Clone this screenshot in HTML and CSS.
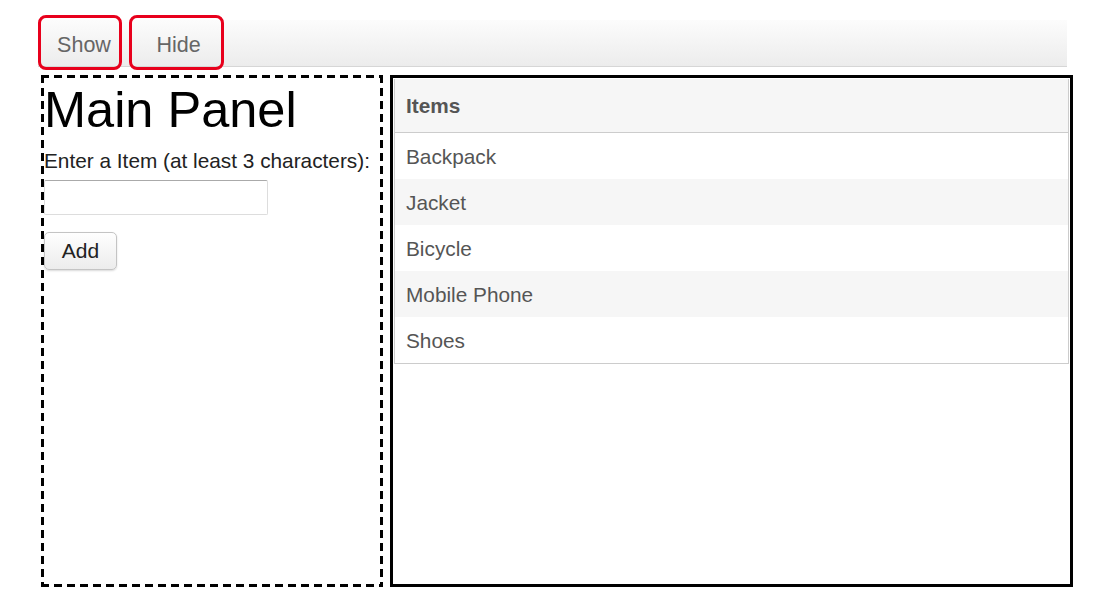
FILE: index.html
```html
<!DOCTYPE html>
<html lang="en">
<head>
    <meta charset="UTF-8">
    <meta name="viewport" content="width=device-width, initial-scale=1.0">
    <title>Main Panel</title>
    <link rel="stylesheet" href="styles.css">
</head>
<body>
    <div class="toolbar">
        <button type="button" class="tool-btn show-btn">Show</button>
        <button type="button" class="tool-btn hide-btn">Hide</button>
    </div>

    <div class="layout">
        <div class="main-panel">
            <h1>Main Panel</h1>
            <label for="itemName">Enter a Item (at least 3 characters):</label>
            <input type="text" id="itemName" name="itemName">
            <button type="button" class="add-btn">Add</button>
        </div>

        <div class="side-panel">
            <ul class="item-list">
                <li class="list-header">Items</li>
                <li>Backpack</li>
                <li>Jacket</li>
                <li>Bicycle</li>
                <li>Mobile Phone</li>
                <li>Shoes</li>
            </ul>
        </div>
    </div>
</body>
</html>
```

FILE: styles.css
```css
body {
    font-family: "Liberation Sans", Arial, sans-serif;
    margin: 0;
    padding: 20px 0 0 38px;
    background: #fff;
}
.toolbar {
    display: flex;
    gap: 7px;
    width: 1029px;
    height: 46px;
    background: linear-gradient(#fcfcfc, #ececec);
    border-bottom: 1px solid #d6d6d6;
}
.tool-btn {
    margin-top: -5px;
    height: 55px;
    padding: 6px 0 0 0;
    border: 3px solid #e8001c;
    border-radius: 8px;
    background: transparent;
    font-family: inherit;
    font-size: 21.5px;
    color: #666;
    cursor: pointer;
}
.show-btn {
    width: 84px;
    padding-left: 8px;
}
.hide-btn {
    width: 95px;
    padding-left: 4px;
}
.layout {
    display: flex;
    gap: 7px;
    margin-top: 8px;
    height: 512px;
}
/* dashed frame drawn with gradients so the dashes are as long as in the mockup */
.main-panel {
    width: 336px;
    margin-left: 3px;
    padding: 3px;
    background:
        repeating-linear-gradient(90deg, #000 0 8px, transparent 8px 13px) left top / 100% 3px no-repeat,
        repeating-linear-gradient(90deg, #000 0 8px, transparent 8px 13px) left bottom / 100% 3px no-repeat,
        repeating-linear-gradient(180deg, #000 0 8px, transparent 8px 13px) left top / 3px 100% no-repeat,
        repeating-linear-gradient(180deg, #000 0 8px, transparent 8px 13px) right top / 3px 100% no-repeat;
}
.main-panel h1 {
    font-size: 50.5px;
    font-weight: normal;
    margin: 3px 0 0 0;
    line-height: 58px;
}
.main-panel label {
    display: block;
    margin-top: 10px;
    font-size: 20.8px;
    color: #222;
}
.main-panel input[type="text"] {
    display: block;
    width: 224px;
    height: 35px;
    margin-top: 7px;
    box-sizing: border-box;
    border: 1px solid #ddd;
    border-top-color: #aaa;
    border-radius: 2px;
}
.add-btn {
    display: block;
    margin-top: 17px;
    width: 73px;
    height: 38px;
    padding: 0;
    border: 1px solid #c4c4c4;
    border-radius: 5px;
    background: linear-gradient(#fefefe, #ececec);
    box-shadow: 0 1px 2px rgba(0, 0, 0, 0.15);
    font-family: inherit;
    font-size: 21px;
    color: #222;
}
.side-panel {
    width: 677px;
    border: 3px solid #000;
}
.item-list {
    list-style: none;
    margin: 1px;
    padding: 0;
    border: 1px solid #ccc;
    border-top: none;
}
.item-list li {
    height: 46px;
    line-height: 48px;
    padding-left: 11px;
    font-size: 20.8px;
    color: #555;
    background: #fff;
}
.item-list li:nth-child(odd) {
    background: #f6f6f6;
}
.item-list .list-header {
    height: 54px;
    line-height: 54px;
    font-weight: bold;
    color: #555;
    background: linear-gradient(#fafafa, #ececec);
    border-bottom: 1px solid #ccc;
    box-sizing: border-box;
}
```
